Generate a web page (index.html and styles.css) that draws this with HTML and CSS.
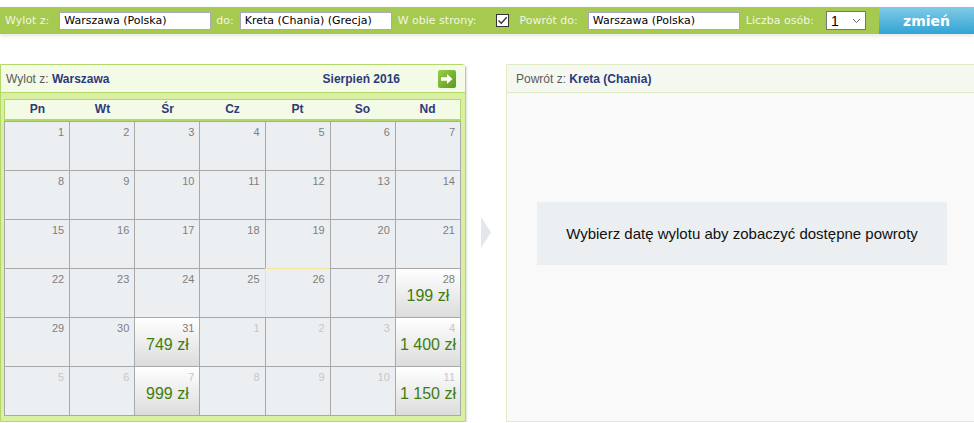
FILE: index.html
```html
<!DOCTYPE html>
<html lang="pl">
<head>
  <meta charset="UTF-8">
  <title>Wyszukiwarka lotów - kalendarz</title>
  <link rel="stylesheet" href="styles.css">
</head>
<body>

  <!-- Search bar -->
  <div class="search-bar">
    <span class="bar-label lbl-from">Wylot z:</span>
    <input class="bar-input" type="text" value="Warszawa (Polska)">
    <span class="bar-label lbl-to">do:</span>
    <input class="bar-input" type="text" value="Kreta (Chania) (Grecja)">
    <span class="bar-label lbl-both">W obie strony:</span>
    <span class="check">
      <svg width="11" height="11" viewBox="0 0 11 11"><path d="M1.5 5.5l2.8 2.8 5.4-6" fill="none" stroke="#333" stroke-width="1.3"/></svg>
    </span>
    <span class="bar-label lbl-back">Powrót do:</span>
    <input class="bar-input" type="text" value="Warszawa (Polska)">
    <span class="bar-label lbl-count">Liczba osób:</span>
    <div class="select">
      <span>1</span>
      <svg width="9" height="6" viewBox="0 0 9 6"><path d="M1 1l3.5 3.5L8 1" fill="none" stroke="#666" stroke-width="1"/></svg>
    </div>
    <button class="btn-change">zmień</button>
  </div>

  <div class="panels">

    <!-- Outbound calendar -->
    <div class="panel panel-out">
      <div class="panel-head">
        <span class="muted">Wylot z:</span>&nbsp;<b>Warszawa</b>
        <b class="month">Sierpień 2016</b>
        <span class="next-btn">
          <svg width="12" height="10" viewBox="0 0 12 10"><path d="M0 3.2h6V0l5.5 5L6 10V6.8H0z" fill="#fff"/></svg>
        </span>
      </div>
      <div class="panel-body cal-body">
        <div class="cal-head">
          <span>Pn</span><span>Wt</span><span>Śr</span><span>Cz</span><span>Pt</span><span>So</span><span>Nd</span>
        </div>
        <div class="cal-grid" id="calGrid"></div>
      </div>
    </div>

    <div class="divider">
      <svg width="10" height="31" viewBox="0 0 10 31"><path d="M0 0l10 15.5L0 31z" fill="#e3e7eb"/></svg>
    </div>

    <!-- Return panel -->
    <div class="panel panel-back">
      <div class="panel-head">
        <span class="muted">Powrót z:</span>&nbsp;<b>Kreta (Chania)</b>
      </div>
      <div class="panel-body back-body">
        <div class="hint">Wybierz datę wylotu aby zobaczyć dostępne powroty</div>
      </div>
    </div>

  </div>

  <script>
    // Days shown in the August 2016 grid (Monday first)
    const prices = { 28: "199 zł", 31: "749 zł", "n4": "1 400 zł", "n7": "999 zł", "n11": "1 150 zł" };
    const grid = document.getElementById("calGrid");

    function addCell(day, key, other) {
      const cell = document.createElement("div");
      cell.className = "cell";
      if (other) cell.classList.add("other");
      if (day === 26 && !other) cell.classList.add("today");
      let html = `<span class="num">${day}</span>`;
      if (prices[key]) {
        cell.classList.add("has-price");
        html += `<span class="price">${prices[key]}</span>`;
      }
      cell.innerHTML = html;
      grid.appendChild(cell);
    }

    for (let d = 1; d <= 31; d++) addCell(d, d, false);
    for (let d = 1; d <= 11; d++) addCell(d, "n" + d, true);
  </script>
</body>
</html>
```

FILE: styles.css
```css
html, body {
  overflow: hidden;
}
body {
  margin: 0;
  background: #ffffff;
  font-family: "Liberation Sans", Arial, sans-serif;
  font-size: 12px;
  color: #333;
}

/* Search bar */
.search-bar {
  display: flex;
  align-items: center;
  height: 27px;
  margin-top: 7px;
  background: #a6ca4f;
  box-shadow: 0 2px 4px rgba(0, 0, 0, 0.1);
  font-family: "DejaVu Sans", Verdana, sans-serif;
  font-size: 11px;
}
.bar-label {
  color: #f1f6e4;
  white-space: nowrap;
}
.lbl-from { margin: 0 10px 0 5px; }
.lbl-to { margin: 0 6px 0 5px; }
.lbl-both { margin: 0 0 0 6px; }
.lbl-back { margin: 0 10px 0 11px; }
.lbl-count { margin: 0 12px 0 6px; }
.bar-input {
  box-sizing: border-box;
  width: 152px;
  height: 18px;
  margin: 0;
  padding: 0 4px;
  border: 1px solid #a9a9b8;
  background: #fff;
  font-family: "DejaVu Sans", Verdana, sans-serif;
  font-size: 11px;
  color: #000;
}
.check {
  box-sizing: border-box;
  display: flex;
  align-items: center;
  justify-content: center;
  width: 13px;
  height: 13px;
  margin-left: 19px;
  border: 1px solid #333;
  background: #fff;
}
.select {
  box-sizing: border-box;
  display: flex;
  align-items: center;
  justify-content: space-between;
  width: 40px;
  height: 19px;
  padding: 0 4px 0 4px;
  border: 1px solid #767676;
  background: #fff;
  font-family: "Liberation Sans", Arial, sans-serif;
  font-size: 14px;
  color: #000;
}
.btn-change {
  width: 95px;
  height: 27px;
  margin-left: auto;
  border: none;
  background: linear-gradient(#82cbe6, #31a3d4);
  color: #fff;
  font-family: "DejaVu Sans", Verdana, sans-serif;
  font-size: 14px;
  font-weight: bold;
  cursor: pointer;
}

/* Panels */
.panels {
  display: flex;
  align-items: flex-start;
  margin-top: 30px;
}
.panel {
  flex: none;
  border: 1px solid #b4d96a;
  border-radius: 0 4px 0 0;
}
.panel-out {
  width: 464px;
  box-shadow: 1px 1px 2px rgba(0, 0, 0, 0.12);
}
.panel-back {
  width: 470px;
  border-color: #e1ecc6;
}
.panel-head {
  display: flex;
  align-items: center;
  height: 27px;
  padding: 0 9px 0 5px;
  border-bottom: 1px solid #b4d96a;
  background: #f3fbe6;
  color: #2d3a7a;
}
.panel-back .panel-head {
  padding-left: 9px;
  background: #f5f8f0;
  border-bottom-color: #dfeac4;
}
.muted {
  color: #5a5a5a;
}
.month {
  margin-left: auto;
}
.next-btn {
  display: flex;
  align-items: center;
  justify-content: center;
  width: 18px;
  height: 18px;
  margin-left: 38px;
  border-radius: 2px;
  background: linear-gradient(135deg, #9ccd4a, #5a9a1f);
}
.panel-body {
  box-sizing: border-box;
  height: 328px;
  background: #f9f9f9;
}
.divider {
  flex: none;
  width: 40px;
  margin-top: 153px;
  display: flex;
  justify-content: center;
}

/* Calendar */
.cal-body {
  padding: 6px 4px 5px 3px;
  background: #d9f0a2;
}
.cal-head {
  display: grid;
  grid-template-columns: repeat(7, 1fr);
  height: 19px;
  border: 1px solid #b2d867;
  border-bottom-width: 2px;
  background: #f3fbe6;
}
.cal-head span {
  text-align: center;
  line-height: 19px;
  font-weight: bold;
  color: #2d3a7a;
}
.cal-grid {
  display: grid;
  grid-template-columns: repeat(7, 1fr);
  border-top: 1px solid #a9a9a9;
  border-left: 1px solid #a9a9a9;
}
.cell {
  position: relative;
  box-sizing: border-box;
  height: 49px;
  padding: 4px 5px 0 0;
  border-right: 1px solid #a9a9a9;
  border-bottom: 1px solid #a9a9a9;
  background: #eceff2;
  text-align: right;
}
.num {
  display: block;
  font-size: 11px;
  line-height: 13px;
  color: #7e7e7e;
}
.other .num {
  color: #c6c6c6;
}
.has-price {
  background: linear-gradient(#ffffff, #dcdcdc);
}
.price {
  display: block;
  margin: 1px -5px 0 0;
  text-align: center;
  font-size: 16px;
  line-height: 18px;
  color: #3f7d10;
}
.today::before {
  content: "";
  position: absolute;
  top: -1px;
  left: -1px;
  right: 0;
  bottom: 0;
  border-top: 1px solid #f3e49a;
  border-left: 1px solid #f3e49a;
}

/* Return hint */
.back-body {
  padding: 109px 0 0 30px;
}
.hint {
  width: 410px;
  height: 63px;
  background: #eceff2;
  text-align: center;
  line-height: 63px;
  font-size: 15px;
  color: #111;
}
```
